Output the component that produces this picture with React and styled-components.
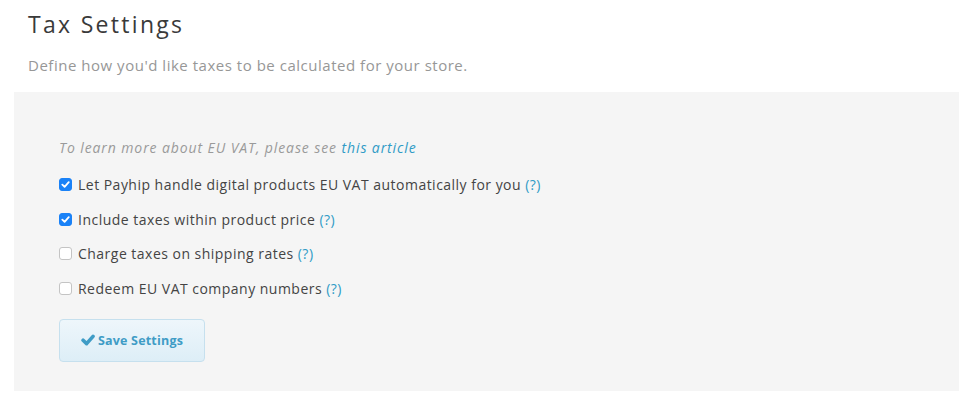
import React, { useState } from 'react';
import styled, { createGlobalStyle } from 'styled-components';

const GlobalStyle = createGlobalStyle`
  body {
    margin: 0;
    background: #fff;
    font-family: "Open Sans", "Liberation Sans", sans-serif;
  }
`;

const Page = styled.div`
  padding: 10px 13px 18px 14px;
`;

const Title = styled.h1`
  margin: 0 0 0 14px;
  font-size: 23px;
  font-weight: 400;
  letter-spacing: 2.3px;
  line-height: 28px;
  color: #3a3a3a;
`;

const Subtitle = styled.p`
  margin: 17px 0 0 14px;
  font-size: 15px;
  letter-spacing: 0.52px;
  line-height: 20px;
  color: #979797;
`;

const Panel = styled.div`
  margin-top: 17px;
  background: #f5f5f5;
  padding: 45px 45px 29px;
  display: flex;
  flex-direction: column;
  align-items: flex-start;
`;

const Note = styled.p`
  margin: 0 0 8px;
  font-size: 14px;
  font-style: italic;
  letter-spacing: 0.9px;
  line-height: 22px;
  color: #9a9a9a;
`;

const Link = styled.a`
  color: #2f9bc6;
  text-decoration: none;
  cursor: pointer;
`;

const Option = styled.label`
  display: flex;
  align-items: center;
  gap: 6px;
  height: 34.7px;
  font-size: 14px;
  letter-spacing: 0.48px;
  color: #444;
  cursor: pointer;
`;

const Box = styled.span`
  width: 13px;
  height: 13px;
  border-radius: 3px;
  box-sizing: border-box;
  display: inline-flex;
  align-items: center;
  justify-content: center;
  background: ${({ checked }) => (checked ? '#1a82f7' : '#fff')};
  border: 1px solid ${({ checked }) => (checked ? '#1a82f7' : '#c4c4c4')};
  flex-shrink: 0;
`;

const Help = styled.span`
  color: #2f9bc6;
`;

const SaveButton = styled.button`
  margin-top: 13px;
  width: 146px;
  height: 43px;
  border: 1px solid #c6e0ee;
  border-radius: 4px;
  background: linear-gradient(#eef6fb, #ddeef7);
  color: #3f9cc6;
  font-family: "Open Sans", "Liberation Sans", sans-serif;
  font-size: 12.5px;
  font-weight: 700;
  letter-spacing: 0.2px;
  display: flex;
  align-items: center;
  justify-content: center;
  gap: 3px;
  cursor: pointer;
`;

const Tick = ({ size = 9, color = '#fff', width = 2 }) => (
  <svg width={size} height={size} viewBox="0 0 10 10">
    <path d="M1.5 5.2 L4 7.6 L8.6 2.4" fill="none" stroke={color} strokeWidth={width} strokeLinecap="round" strokeLinejoin="round" />
  </svg>
);

const options = [
  { label: 'Let Payhip handle digital products EU VAT automatically for you', checked: true },
  { label: 'Include taxes within product price', checked: true },
  { label: 'Charge taxes on shipping rates', checked: false },
  { label: 'Redeem EU VAT company numbers', checked: false },
];

export default function App() {
  const [values, setValues] = useState(options.map(o => o.checked));

  const toggle = i => setValues(v => v.map((x, j) => (j === i ? !x : x)));

  return (
    <Page>
      <GlobalStyle />
      <Title>Tax Settings</Title>
      <Subtitle>Define how you'd like taxes to be calculated for your store.</Subtitle>
      <Panel>
        <Note>
          To learn more about EU VAT, please see <Link>this article</Link>
        </Note>
        {options.map((o, i) => (
          <Option key={o.label} onClick={() => toggle(i)}>
            <Box checked={values[i]}>{values[i] && <Tick />}</Box>
            <span>
              {o.label} <Help>(?)</Help>
            </span>
          </Option>
        ))}
        <SaveButton>
          <Tick size={14} color="#3f9cc6" width={2.6} />
          Save Settings
        </SaveButton>
      </Panel>
    </Page>
  );
}
